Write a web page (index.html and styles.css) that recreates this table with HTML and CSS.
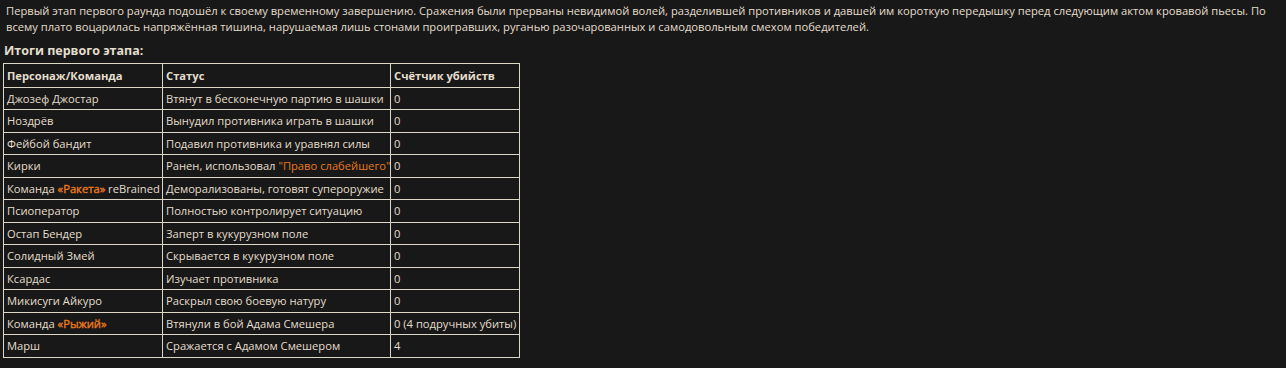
FILE: index.html
```html
<!DOCTYPE html>
<html lang="ru">
<head>
<meta charset="utf-8">
<link rel="stylesheet" href="styles.css">
</head>
<body>
<div class="post">
<p class="intro">Первый этап первого раунда подошёл к своему временному завершению. Сражения были прерваны невидимой волей, разделившей противников и давшей им короткую передышку перед следующим актом кровавой пьесы. По всему плато воцарилась напряжённая тишина, нарушаемая лишь стонами проигравших, руганью разочарованных и самодовольным смехом победителей.</p>
<h3 class="title">Итоги первого этапа:</h3>
<table class="results">
<colgroup><col class="c1"><col class="c2"><col class="c3"></colgroup>
<tr><th>Персонаж/Команда</th><th>Статус</th><th>Счётчик убийств</th></tr>
<tr><td>Джозеф Джостар</td><td>Втянут в бесконечную партию в шашки</td><td>0</td></tr>
<tr><td>Ноздрёв</td><td>Вынудил противника играть в шашки</td><td>0</td></tr>
<tr><td>Фейбой бандит</td><td>Подавил противника и уравнял силы</td><td>0</td></tr>
<tr><td>Кирки</td><td>Ранен, использовал <span class="hl">"Право слабейшего"</span></td><td>0</td></tr>
<tr><td>Команда <b class="hl">«Ракета»</b> reBrained</td><td>Деморализованы, готовят супероружие</td><td>0</td></tr>
<tr><td>Псиоператор</td><td>Полностью контролирует ситуацию</td><td>0</td></tr>
<tr><td>Остап Бендер</td><td>Заперт в кукурузном поле</td><td>0</td></tr>
<tr><td>Солидный Змей</td><td>Скрывается в кукурузном поле</td><td>0</td></tr>
<tr><td>Ксардас</td><td>Изучает противника</td><td>0</td></tr>
<tr><td>Микисуги Айкуро</td><td>Раскрыл свою боевую натуру</td><td>0</td></tr>
<tr><td>Команда <b class="hl">«Рыжий»</b></td><td>Втянули в бой Адама Смешера</td><td>0 (4 подручных убиты)</td></tr>
<tr><td>Марш</td><td>Сражается с Адамом Смешером</td><td>4</td></tr>
</table>
</div>
</body>
</html>
```

FILE: styles.css
```css
html, body {
  margin: 0;
  padding: 0;
  background: #181818;
}
body {
  font-family: "Open Sans", "DejaVu Sans", sans-serif;
  font-size: 11.2px;
  color: #e4decd;
}
.post {
  padding: 3px 3px 0 3px;
}
.intro {
  margin: 0;
  padding-left: 3px;
  line-height: 16px;
}
.title {
  margin: 7px 0 4px 1px;
  font-size: 12.5px;
  font-weight: bold;
  line-height: 17px;
}
.results {
  border-collapse: collapse;
  table-layout: fixed;
  width: 516px;
  border: 1px solid #dcd7c6;
}
.results th,
.results td {
  border: 1px solid #dcd7c6;
  padding: 3px 2px 3px 3px;
  line-height: 15.5px;
  text-align: left;
  white-space: nowrap;
}
.results th {
  font-weight: bold;
  padding-top: 3.5px;
  padding-bottom: 3.5px;
}
.c1 { width: 159px; }
.c2 { width: 228px; }
.c3 { width: 129px; }
.hl {
  color: #e8781e;
}
b.hl {
  font-weight: normal;
  -webkit-text-stroke: 0.4px #e8781e;
}
```
